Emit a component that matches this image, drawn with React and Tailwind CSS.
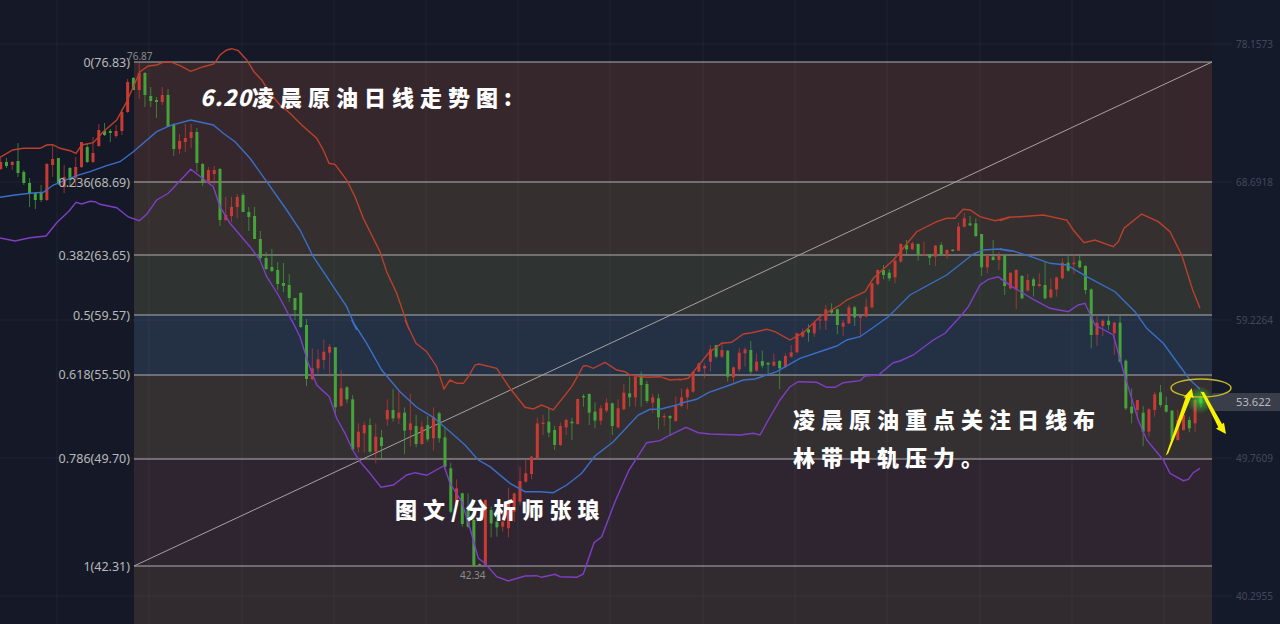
const seg1 = [
[158,170,162,169,'r'],[158,168,162,166,'g'],[161,170,162,165,'r'],[143,177,161,173,'g'],[170,185,172,183,'g'],[178,207,183,193,'g'],[192,209,193,200,'g'],[185,202,193,200,'g'],[163,201,164,200,'r'],[145,177,159,165,'r'],
[158,185,158,183,'g'],[165,193,177,187,'r'],[167,187,168,180,'g'],[157,187,167,178,'r'],[142,168,142,167,'r'],[144,163,147,162,'g'],[137,163,153,162,'r'],[124,147,130,146,'r'],[123,136,131,135,'g'],[129,142,131,133,'g'],
[125,138,131,136,'r'],[109,135,112,131,'r'],[79,113,82,112,'r'],[77,90,78,90,'g'],[63,99,73,90,'r'],[72,107,73,95,'g'],[87,107,96,101,'g'],[97,118,100,102,'g'],[87,105,95,102,'r'],[89,127,95,127,'g'],
[123,156,124,149,'g'],[134,154,141,149,'r'],[124,152,138,142,'r'],[124,148,132,138,'r'],[128,172,132,163,'g'],[163,186,164,183,'g'],[167,184,170,182,'r'],[166,185,170,174,'r'],[168,226,169,220,'g'],[197,221,215,220,'r'],
[197,222,207,216,'r'],[194,218,197,207,'r'],[193,212,195,212,'g'],[207,231,212,217,'g'],[207,239,216,239,'g'],[231,260,239,258,'g'],[252,270,258,269,'g'],[249,272,267,271,'g'],[262,290,270,284,'g'],[263,292,283,286,'g'],
[274,302,285,298,'g'],[298,320,298,310,'g'],[292,328,293,327,'g'],[319,386,325,379,'g'],
];
const seg2 = [
[85,180,145,178,'r'],[88,160,118,145,'r'],[58,148,95,120,'r'],[72,170,80,98,'r'],[82,280,82,262,'g'],[150,260,205,258,'r'],[198,250,202,238,'g'],[225,390,238,388,'g'],[310,398,335,382,'r'],[305,398,315,340,'r'],
[295,400,315,395,'g'],[310,430,350,395,'r'],[330,418,352,378,'g'],[238,318,270,298,'r'],[207,305,270,295,'g'],[212,312,278,295,'r'],[262,402,278,332,'g'],[222,380,310,330,'r'],[285,382,318,372,'g'],[305,375,320,372,'r'],
[288,365,315,358,'g'],[262,392,292,355,'r'],[275,368,280,355,'g'],[320,450,352,440,'g'],[428,580,445,575,'g'],[478,570,505,560,'r'],[518,620,520,612,'g'],[520,625,560,620,'g'],[595,738,600,738,'g'],[731,737,732,736,'g'],
[538,738,540,735,'r'],[560,652,570,610,'g'],[570,650,605,622,'g'],[570,635,605,620,'r'],[503,652,550,625,'r'],[518,605,520,575,'r'],[440,555,483,545,'r'],[418,488,460,485,'r'],[408,478,410,462,'r'],[293,418,310,415,'r'],
[285,345,308,312,'r'],[265,352,305,338,'g'],[318,390,330,375,'g'],[308,378,318,375,'r'],[295,345,300,322,'r'],[293,360,305,310,'g'],[235,315,237,312,'r'],[222,260,228,232,'g'],[220,315,222,278,'g'],[247,325,275,302,'g'],
[255,315,265,302,'r'],[235,278,248,272,'r'],[248,345,250,318,'g'],[238,325,265,322,'r'],[192,270,218,268,'r'],[170,260,220,232,'g'],[165,260,170,232,'r'],[155,260,168,195,'g'],[183,250,192,243,'g'],[222,278,232,248,'r'],
[222,328,235,292,'g'],[280,318,288,292,'r'],[285,348,288,295,'g'],[230,305,258,303,'r'],[205,262,232,258,'r'],[202,268,208,232,'r'],[153,218,155,215,'r'],
];
const seg3 = [
[518,545,520,545,'r'],[520,565,528,535,'r'],[465,545,478,515,'r'],[465,505,465,500,'g'],[455,505,480,500,'r'],[480,575,482,560,'g'],[530,578,532,562,'r'],[473,545,488,538,'r'],[472,530,478,490,'r'],[453,552,480,545,'g'],
[490,545,515,542,'r'],[482,535,513,527,'g'],[518,555,518,524,'g'],[490,530,515,527,'r'],[510,597,513,535,'g'],[490,535,498,530,'r'],[465,503,487,500,'r'],[428,490,430,487,'r'],[415,442,425,440,'r'],[403,455,418,428,'g'],
[392,440,398,430,'r'],[375,418,388,392,'r'],[345,420,358,392,'r'],[340,372,358,368,'g'],[355,433,358,405,'g'],[390,437,398,410,'r'],[345,402,352,400,'r'],[348,408,352,382,'g'],[378,437,378,383,'r'],[325,382,350,380,'r'],
[278,355,280,352,'r'],[238,287,240,282,'r'],[225,268,240,255,'g'],[238,273,248,265,'g'],[208,280,212,262,'r'],[160,218,162,215,'r'],[150,195,165,178,'g'],[155,180,160,178,'r'],[160,212,162,195,'g'],[155,198,192,196,'r'],
[192,225,192,203,'g'],[165,228,167,200,'r'],[157,197,165,195,'g'],[178,207,180,195,'r'],[178,185,179,183,'g'],[98,182,110,182,'r'],[68,112,85,110,'r'],[78,108,100,106,'g'],[85,142,100,138,'g'],[132,258,132,232,'g'],
[196,250,196,232,'r'],[150,212,200,210,'g'],[185,240,198,210,'r'],
];
const seg4 = [
[165,285,165,258,'g'],[218,268,218,265,'r'],[208,327,210,268,'r'],[225,298,228,295,'g'],[222,275,240,272,'r'],[232,290,238,258,'g'],[220,262,252,258,'r'],[185,298,255,295,'g'],[235,295,268,292,'r'],[230,290,232,268,'r'],
[175,238,188,235,'r'],[168,215,188,212,'g'],[162,222,188,193,'r'],[165,205,182,202,'g'],[195,283,198,270,'g'],[265,445,268,405,'g'],[345,438,368,405,'r'],[358,408,362,378,'r'],[348,390,362,375,'g'],[365,465,368,400,'r'],
[345,488,368,485,'g'],[478,630,482,625,'g'],[565,670,620,640,'g'],[600,660,600,630,'r'],[618,738,638,695,'g'],[625,710,628,695,'r'],[575,650,583,630,'r'],[555,622,577,615,'g'],[590,638,615,635,'g'],[630,725,632,720,'g'],
[630,722,660,720,'r'],[615,692,645,690,'r'],[650,697,660,685,'g'],[590,695,600,670,'r'],[575,622,592,610,'g'],
];
const conv = (oy, a) => a.map(([t, b, bt, bb, c]) => [oy + t / 3, oy + b / 3, oy + bt / 3, oy + bb / 3, c]);
const candles = [...seg1, ...conv(320, seg2), ...conv(190, seg3), ...conv(200, seg4)];

const pl = (ox, oy, p) => p.map(([x, y]) => `${(ox + x / 3).toFixed(1)},${(oy + y / 3).toFixed(1)}`).join(' ');
const red = [
pl(0,30,[[0,382],[38,360],[70,355],[120,355],[140,345],[158,344],[180,355],[210,362],[228,370],[245,345],[280,338],[310,305],[350,270],[380,215],[420,125],[445,108],[470,105],[495,95],[510,95],[540,107],[572,124],[610,110],[642,102],[660,75],[680,60],[695,56],[715,62],[740,90],[762,125],[785,150],[810,190],[840,225],[870,250],[905,285],[950,325],[970,360],[987,400],[1005,403],[1040,450],[1065,500],[1090,565],[1140,665],[1160,725],[1190,790],[1228,900]]),
pl(280,320,[[375,0],[408,70],[440,95],[470,140],[492,207],[510,180],[530,190],[550,190],[565,170],[585,135],[597,132],[650,145],[690,205],[735,262],[760,267],[785,255],[820,270],[875,200],[910,138],[920,137],[940,145],[975,127],[1010,150],[1035,155],[1050,165],[1100,172],[1140,170],[1170,180],[1200,178]]),
pl(680,190,[[0,570],[25,565],[45,540],[85,490],[125,460],[155,457],[190,432],[215,428],[260,418],[285,425],[330,450],[370,428],[420,380],[480,345],[500,330],[555,305],[580,265],[640,210],[665,180],[710,125],[770,95],[800,85],[825,85],[850,58],[870,60],[900,80],[945,92],[990,82]]),
pl(1000,200,[[0,62],[25,52],[60,50],[130,45],[200,60],[220,90],[252,128],[285,120],[340,140],[355,125],[372,85],[425,42],[475,65],[510,95],[545,165],[578,270],[600,325]]),
].join(' ');
const blue = [
pl(0,30,[[0,502],[45,495],[90,490],[130,487],[160,465],[230,437],[270,425],[320,407],[360,395],[400,365],[470,305],[510,287],[572,270],[640,285],[670,310],[705,335],[750,385],[800,455],[860,540],[900,600],[940,680],[1040,830],[1070,900]]),
pl(280,320,[[215,0],[260,70],[305,150],[360,215],[410,262],[460,292],[510,335],[555,375],[595,420],[630,440],[690,490],[735,515],[780,515],[820,518],[860,495],[905,460],[945,408],[1000,365],[1075,285],[1110,268],[1140,268],[1200,253]]),
pl(680,190,[[0,640],[50,628],[85,608],[150,585],[190,570],[225,567],[290,545],[360,505],[470,468],[500,450],[540,440],[590,405],[625,380],[690,315],[800,255],[880,192],[910,180],[955,177],[990,183]]),
pl(1000,200,[[0,147],[40,153],[100,172],[150,190],[200,195],[260,230],[345,275],[405,335],[440,385],[490,430],[570,540],[600,567]]),
].join(' ');
const purple = [
pl(0,30,[[0,624],[45,633],[90,623],[138,618],[170,578],[208,542],[228,517],[245,522],[270,514],[285,515],[300,523],[350,533],[385,561],[418,572],[440,553],[470,510],[505,490],[572,418],[640,470],[660,530],[690,580],[750,650],[780,690],[800,740],[835,795],[890,900]]),
pl(280,320,[[35,0],[60,50],[85,130],[110,195],[148,230],[170,295],[195,340],[218,390],[240,425],[270,460],[303,502],[340,495],[380,465],[405,458],[440,466],[492,437],[510,490],[545,545],[570,625],[595,715],[615,730],[650,770],[685,783],[735,768],[770,767],[785,772],[825,763],[840,770],[890,772],[910,762],[942,668],[965,650],[1005,545],[1047,450],[1100,368],[1140,362],[1170,345],[1218,322],[1255,338],[1290,342],[1380,345],[1420,340]]),
pl(680,190,[[240,735],[265,690],[300,630],[330,590],[355,575],[410,577],[440,592],[465,592],[490,578],[540,572],[555,558],[595,555],[640,518],[660,513],[700,495],[760,450],[795,430],[845,375],[865,350],[900,285],[925,268],[955,260],[990,285]]),
pl(1000,200,[[0,235],[40,262],[100,298],[150,325],[205,335],[235,315],[255,310],[285,375],[340,405],[372,520],[415,660],[440,720],[490,780],[510,820],[550,842],[565,838],[580,818],[600,805]]),
].join(' ');

const gridX = [57, 149, 242, 334, 426, 518, 610, 703, 795, 887, 980, 1072, 1164];
const fibY = [62, 182, 255, 315, 375, 459, 566];
const fibLabels = [
  ['0(76.83)', 'top-[54px]'], ['0.236(68.69)', 'top-[174px]'], ['0.382(63.65)', 'top-[247px]'], ['0.5(59.57)', 'top-[307px]'],
  ['0.618(55.50)', 'top-[366px]'], ['0.786(49.70)', 'top-[450px]'], ['1(42.31)', 'top-[558px]'],
];
const axis = [['78.1573', 'top-[37px]'], ['68.6918', 'top-[175px]'], ['59.2264', 'top-[313px]'], ['49.7609', 'top-[451px]'], ['40.2955', 'top-[589px]']];
const up = pl(1100, 340, [[197,347],[257,172],[250,174],[275,145],[281,174],[273,172],[205,340]]);
const down = pl(1100, 340, [[302,155],[312,156],[366,252],[372,248],[378,282],[348,266],[355,262]]);

const brush = "absolute font-['Noto_Sans_CJK_SC',sans-serif] font-black text-white whitespace-nowrap";

export default function App() {
  return (
    <div className="relative w-[1280px] h-[624px] overflow-hidden bg-[#151927] font-['Noto_Sans',sans-serif]">
      <div className="flex h-full">
        <div className="w-[134px] shrink-0" />
        <div className="w-[1078px] shrink-0 flex flex-col">
          <div className="h-[62px] shrink-0" />
          <div className="h-[120px] shrink-0 bg-[#36272c]" />
          <div className="h-[73px] shrink-0 bg-[#362f30]" />
          <div className="h-[60px] shrink-0 bg-[#2f3331]" />
          <div className="h-[60px] shrink-0 bg-[#243043]" />
          <div className="h-[84px] shrink-0 bg-[#342f31]" />
          <div className="h-[107px] shrink-0 bg-[#2e2531]" />
          <div className="h-[58px] shrink-0 bg-[#312b2f]" />
        </div>
        <div className="flex-1 bg-[#151a2a]" />
      </div>

      <svg className="absolute inset-0 blur-[0.4px]" width="1280" height="624" viewBox="0 0 1280 624">
        <defs>
          <radialGradient id="glow">
            <stop offset="0%" stopColor="#3fe83f" stopOpacity="0.7" />
            <stop offset="100%" stopColor="#3fe83f" stopOpacity="0" />
          </radialGradient>
        </defs>
        {gridX.map((x) => <line key={x} x1={x} x2={x} y1="0" y2="624" stroke="#ffffff" strokeOpacity="0.05" />)}
        {[44, 182, 320, 458, 596].map((y) => <line key={y} x1="0" x2="1232" y1={y} y2={y} stroke="#ffffff" strokeOpacity="0.05" />)}
        {fibY.map((y) => <line key={y} x1="134" x2="1212" y1={y} y2={y} stroke="#b0b0b0" strokeWidth="1.2" />)}
        <line x1="134" y1="566" x2="1212" y2="62" stroke="#a8a2a2" strokeWidth="1" />
        {candles.map(([t, b, bt, bb, c], i) => {
          const x = 0.7 + 5.77 * i;
          const col = c === 'r' ? '#c93a34' : '#46a33b';
          return (
            <g key={i}>
              <line x1={x} x2={x} y1={t} y2={b} stroke={col} strokeOpacity="0.7" strokeWidth="1" />
              <rect x={x - 1.5} y={bt} width="3" height={Math.max(bb - bt, 1)} fill={col} />
            </g>
          );
        })}
        <polyline points={red} fill="none" stroke="#bb402b" strokeWidth="1.4" />
        <polyline points={blue} fill="none" stroke="#3a6fc8" strokeWidth="1.4" />
        <polyline points={purple} fill="none" stroke="#7e3fc4" strokeWidth="1.4" />
        <circle cx="1200" cy="400" r="14" fill="url(#glow)" />
        <polygon points="1207,402 1213,393 1280,393 1280,411 1213,411" fill="#3a3e4a" />
        <ellipse cx="1201" cy="388" rx="30" ry="9" fill="none" stroke="#c4b82a" strokeWidth="1.5" />
        <polygon points={up} fill="#f7f200" />
        <polygon points={down} fill="#f7f200" />
      </svg>

      {fibLabels.map(([t, pos]) => (
        <div key={t} className={`absolute left-0 w-[130px] text-right text-[12.5px] leading-[17px] text-[#b8b8b8] ${pos}`}>{t}</div>
      ))}
      {axis.map(([t, pos]) => (
        <div key={t} className={`absolute left-[1236px] text-[10px] leading-[14px] text-[#42485a] ${pos}`}>{t}</div>
      ))}
      <div className="absolute left-[1236px] top-[395px] text-[11.2px] leading-[14px] text-[#b8bac0]">53.622</div>
      <div className="absolute left-[127px] top-[50px] text-[10px] leading-[12px] text-[#8a8a8a]">76.87</div>
      <div className="absolute left-[460px] top-[569px] text-[10px] leading-[12px] text-[#8a8a8a]">42.34</div>

      <div className={`${brush} left-[200px] top-[81px] text-[22px] leading-[30px] tracking-[6px]`}><span className="italic tracking-[1px]">6.20</span>凌晨原油日线走势图:</div>
      <div className={`${brush} left-[395px] top-[493px] text-[22px] leading-[30px] tracking-[6px]`}>图文/分析师张琅</div>
      <div className={`${brush} left-[793px] top-[403px] text-[22px] leading-[30px] tracking-[6px]`}>凌晨原油重点关注日线布</div>
      <div className={`${brush} left-[793px] top-[441px] text-[22px] leading-[30px] tracking-[6px]`}>林带中轨压力。</div>
    </div>
  );
}
